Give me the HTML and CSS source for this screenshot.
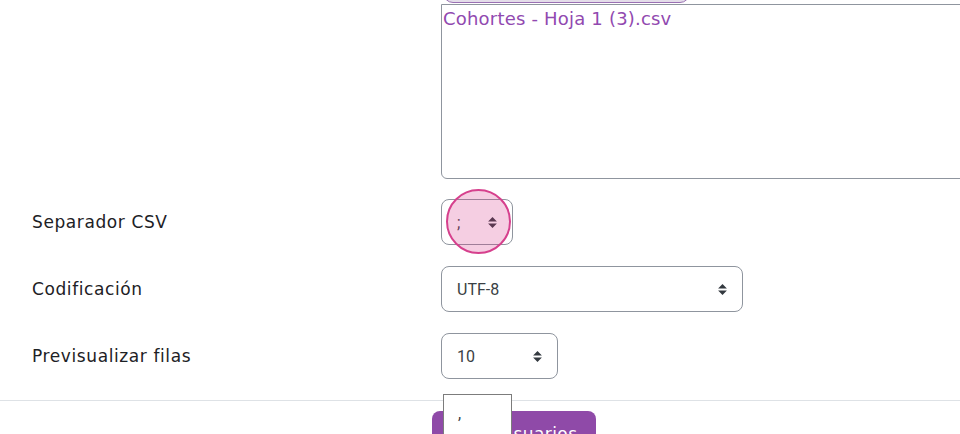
FILE: index.html
```html
<!DOCTYPE html>
<html lang="es">
<head>
<meta charset="utf-8">
<title>Subir usuarios</title>
<link rel="stylesheet" href="styles.css">
</head>
<body>
<div class="page">
  <form class="form">
    <div class="row file-row">
      <div class="label"></div>
      <div class="control">
        <div class="file-btn"></div>
        <div class="filebox"><span class="filename">Cohortes - Hoja 1 (3).csv</span></div>
      </div>
    </div>
    <div class="row">
      <div class="label">Separador CSV</div>
      <div class="control">
        <div class="select sel-sep"><span>;</span>
          <svg class="arrows" viewBox="0 0 4 5" width="9" height="11"><path fill="#343a40" d="M2 0L0 2h4zm0 5L0 3h4z"/></svg>
        </div>
      </div>
    </div>
    <div class="row">
      <div class="label">Codificación</div>
      <div class="control">
        <div class="select sel-enc"><span>UTF-8</span>
          <svg class="arrows" viewBox="0 0 4 5" width="9" height="11"><path fill="#343a40" d="M2 0L0 2h4zm0 5L0 3h4z"/></svg>
        </div>
      </div>
    </div>
    <div class="row">
      <div class="label">Previsualizar filas</div>
      <div class="control">
        <div class="select sel-rows"><span>10</span>
          <svg class="arrows" viewBox="0 0 4 5" width="9" height="11"><path fill="#343a40" d="M2 0L0 2h4zm0 5L0 3h4z"/></svg>
        </div>
      </div>
    </div>
  </form>
  <hr class="divider">
  <div class="actions">
    <button class="btn-primary" type="button">Subir usuarios</button>
  </div>
  <div class="popup"><div class="option">,</div></div>
  <div class="spot"></div>
</div>
</body>
</html>
```

FILE: styles.css
```css
html, body {
  margin: 0;
  padding: 0;
  background: #ffffff;
  width: 960px;
  height: 434px;
  overflow: hidden;
}
.page {
  position: relative;
  width: 960px;
  height: 434px;
  font-family: "DejaVu Sans", "Open Sans", sans-serif;
  color: #1d2125;
}
.form {
  display: flex;
  flex-direction: column;
  gap: 21px;
}
.row {
  display: grid;
  grid-template-columns: 409px 1fr;
  align-items: center;
  padding-left: 32px;
}
.label {
  font-size: 17px;
  line-height: 24px;
  letter-spacing: 0.6px;
  color: #1d2125;
  white-space: nowrap;
}
.file-row {
  align-items: start;
}
.file-row + .row {
  margin-top: -1px;
}
.control {
  min-width: 0;
}
.file-btn {
  width: 247px;
  height: 20px;
  margin-top: -17px;
  margin-bottom: 1px;
  margin-left: 2px;
  box-sizing: border-box;
  border: 1px solid #9a70b3;
  border-radius: 10px;
  background: #e4dde9;
}
.filebox {
  width: 620px;
  height: 175px;
  box-sizing: border-box;
  border: 1px solid #8f959e;
  border-radius: 0 0 0 6px;
  padding: 2px 0 0 1px;
}
.filename {
  font-size: 18px;
  line-height: 24px;
  letter-spacing: 0.2px;
  color: #9149b0;
}
.select {
  display: flex;
  align-items: center;
  justify-content: space-between;
  height: 46px;
  box-sizing: border-box;
  border: 1px solid #8f959e;
  border-radius: 8px;
  padding: 0 15px 0 15px;
  font-family: "Roboto", "Liberation Sans", sans-serif;
  font-size: 16px;
  color: #3a3f44;
  background: #ffffff;
}
.sel-sep { width: 72px; }
.sel-enc { width: 302px; }
.sel-rows { width: 117px; }
.arrows { display: block; flex: none; }
.divider {
  margin: 21px 0 0 0;
  border: 0;
  border-top: 1px solid #dee2e6;
  height: 0;
}
.actions {
  padding: 10px 0 0 432px;
}
.btn-primary {
  width: 164px;
  height: 46px;
  border: 0;
  border-radius: 8px;
  background: #8f4aa8;
  color: #ffffff;
  font-family: "DejaVu Sans", "Open Sans", sans-serif;
  font-size: 17px;
  letter-spacing: 0.4px;
  padding: 0;
}
.popup {
  position: absolute;
  left: 443px;
  top: 394px;
  width: 69px;
  height: 60px;
  box-sizing: border-box;
  border: 1px solid #7c7c7c;
  background: #ffffff;
  padding: 10px 0 0 14px;
}
.option {
  font-family: "Roboto", "Liberation Sans", sans-serif;
  font-size: 16px;
  line-height: 18px;
  color: #3a3f44;
}
.spot {
  position: absolute;
  left: 446px;
  top: 189px;
  width: 65px;
  height: 65px;
  box-sizing: border-box;
  border-radius: 50%;
  border: 2px solid #d6408d;
  background: rgba(214, 51, 132, 0.24);
}
```
